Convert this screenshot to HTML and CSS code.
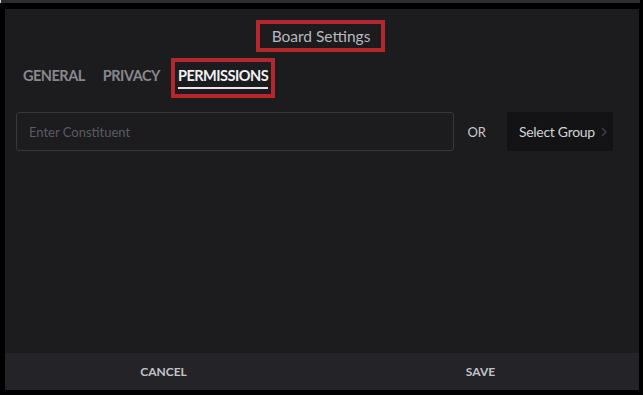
FILE: index.html
```html
<!DOCTYPE html>
<html lang="en">

<head>
  <meta charset="UTF-8" />
  <title>Board Settings</title>
  <link rel="stylesheet" href="styles.css">
</head>

<body>
  <div class="topbar"></div>

  <div class="dialog">
    <div class="dialog-head">
      <h2 class="title marked">Board Settings</h2>
    </div>

    <!-- tabs -->
    <div class="tabs">
      <a href="#" class="tab"><span>GENERAL</span></a>
      <a href="#" class="tab"><span>PRIVACY</span></a>
      <a href="#" class="tab active marked"><span>PERMISSIONS</span></a>
    </div>

    <div class="picker">
      <input type="text" class="constituent" placeholder="Enter Constituent" />
      <span class="or">OR</span>
      <button class="group-btn">Select Group
        <svg width="6" height="10" viewBox="0 0 6 10"><path d="M1 1l4 4-4 4" fill="none" stroke="#36363b" stroke-width="1.8"/></svg>
      </button>
    </div>

    <div class="spacer"></div>

    <div class="footer">
      <button class="foot-btn">CANCEL</button>
      <button class="foot-btn">SAVE</button>
    </div>
  </div>
</body>

</html>
```

FILE: styles.css
```css
body {
  margin: 0;
  background: #000;
  font-family: Lato, 'Open Sans', sans-serif;
  height: 395px;
  overflow: hidden;
}

.topbar {
  height: 3px;
  margin-right: 3px;
  background: #2b2b30;
  border-left: 1px solid #cfcfd2;
}

.dialog {
  margin: 6px 4px 0 5px;
  height: 381px;
  background: #1c1c1f;
  display: flex;
  flex-direction: column;
}

.marked {
  border: 4px solid #b3272d;
}

.dialog-head {
  text-align: center;
  padding-top: 11px;
  padding-right: 3px;
}

.title {
  display: inline-block;
  margin: 0;
  padding: 0 11px 0 12px;
  line-height: 24px;
  font-size: 15.5px;
  font-weight: 400;
  color: #b8b9be;
}

.tabs {
  display: flex;
  gap: 4px;
  margin-top: 6px;
  padding-left: 11px;
}

.tab {
  border: 4px solid transparent;
  padding: 4px 3px 5px;
  font-size: 14.5px;
  font-weight: 700;
  letter-spacing: -0.5px;
  line-height: 20px;
  color: #88888d;
  text-decoration: none;
}

.tab span {
  display: block;
  padding-bottom: 1px;
  border-bottom: 2px solid transparent;
}

.tab.active {
  border-color: #b3272d;
  color: #f2f2f4;
}

.tab.active span {
  border-bottom-color: #e6e6e8;
}

.picker {
  display: flex;
  align-items: center;
  margin-top: 14px;
  padding: 0 26px 0 11px;
}

.constituent {
  flex: 1;
  height: 39px;
  box-sizing: border-box;
  padding: 0 12px;
  background: #1c1c1f;
  border: 1px solid #37373b;
  border-radius: 3px;
  font-family: Lato, sans-serif;
  font-size: 13px;
  color: #ddd;
}

.constituent::placeholder {
  color: #5b5b60;
}

.or {
  margin: 0 21px 0 13px;
  font-size: 13px;
  color: #c8c8cb;
}

.group-btn {
  display: flex;
  align-items: center;
  gap: 6px;
  width: 106px;
  height: 39px;
  padding: 0 0 0 12px;
  background: #131315;
  border: none;
  border-radius: 3px;
  font-family: Lato, sans-serif;
  font-size: 14px;
  letter-spacing: -0.3px;
  color: #d2d2d5;
  cursor: pointer;
}

.spacer {
  flex: 1;
}

.footer {
  display: flex;
  height: 37px;
  background: #232328;
}

.foot-btn {
  flex: 1;
  background: none;
  border: none;
  font-family: Lato, sans-serif;
  font-size: 12px;
  font-weight: 700;
  color: #c4c4c8;
  cursor: pointer;
}
```
